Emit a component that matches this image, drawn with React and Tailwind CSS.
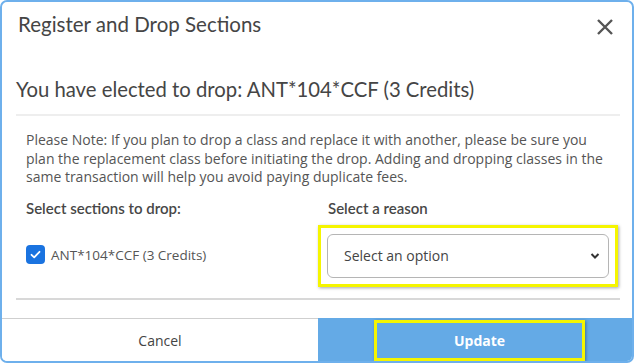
import React from "react";

const DropDialog = () => {
  return (
    <div className="w-[635px] h-[364px] bg-white">
      <div className="w-[634px] h-[363px] border-2 border-[#6eb0ec] rounded-[7px] overflow-hidden flex flex-col bg-white">
        {/* Header */}
        <div className="flex items-start justify-between pl-[16px] pr-[18px] pt-[9px] h-[44px]">
          <h2 className="text-[20.5px] leading-[26px] text-[#454545] font-['Lato',sans-serif]">
            Register and Drop Sections
          </h2>
          <button className="mt-[7px] text-[#555]">
            <svg width="18" height="18" viewBox="0 0 18 18" fill="none" stroke="currentColor" strokeWidth="2.4">
              <path d="M2 2L16 16M16 2L2 16" />
            </svg>
          </button>
        </div>

        <div className="flex-1 px-[14px] flex flex-col">
          <div className="pt-[31px] pb-[13px] border-b-2 border-[#eeeeee] mr-[-2px]">
            <h3 className="text-[20.3px] leading-[24px] text-[#454545] font-['Lato',sans-serif]">
              You have elected to drop: ANT*104*CCF (3 Credits)
            </h3>
          </div>

          <div className="pl-[10px] pt-[15px] font-['Open_Sans',sans-serif] text-[14px] leading-[18.5px] text-[#555]">
            <p className="whitespace-nowrap">
              Please Note: If you plan to drop a class and replace it with another, please be sure you
              <br />
              plan the replacement class before initiating the drop. Adding and dropping classes in the
              <br />
              same transaction will help you avoid paying duplicate fees.
            </p>
          </div>

          <div className="grid grid-cols-2 px-[10px] pt-[11px]">
            <div>
              <div className="text-[15px] leading-[20px] font-semibold text-[#474747] font-['Lato',sans-serif]">
                Select sections to drop:
              </div>
              <label className="flex items-center gap-[6px] mt-[27px] font-['Open_Sans',sans-serif] text-[13.5px] text-[#555]">
                <span className="w-[19px] h-[19px] rounded-[4px] bg-[#1a73e0] flex items-center justify-center">
                  <svg width="13" height="13" viewBox="0 0 13 13" fill="none" stroke="white" strokeWidth="1.8" strokeLinecap="round" strokeLinejoin="round">
                    <path d="M2.5 6.8L5.2 9.3L10.5 3.8" />
                  </svg>
                </span>
                ANT*104*CCF (3 Credits)
              </label>
            </div>
            <div className="pl-[11px]">
              <div className="text-[15px] leading-[20px] font-semibold text-[#474747] font-['Lato',sans-serif]">
                Select a reason
              </div>
              <div className="ml-[-10px] mt-[7px] w-[300px] h-[62px] border-[3px] border-[#f5f500] shadow-[1px_1px_3px_rgba(0,0,0,0.35)] p-[6px]">
                <div className="h-[44px] rounded-[6px] border border-[#b5b5b5] flex items-center justify-between pl-[16px] pr-[8px] font-['Open_Sans',sans-serif] text-[14px] text-[#444]">
                  <span>Select an option</span>
                  <svg width="10" height="8" viewBox="0 0 10 8" fill="none" stroke="#333" strokeWidth="2">
                    <path d="M1.5 2L5 5.5L8.5 2" />
                  </svg>
                </div>
              </div>
            </div>
          </div>

          <div className="mt-[11px] border-t-2 border-[#d8d8d8] mr-[-2px]" />
        </div>

        {/* Footer */}
        <div className="flex h-[43px] font-['Open_Sans',sans-serif] text-[14px]">
          <button className="w-[316px] border-t border-[#cfcfcf] text-[#444] bg-white">Cancel</button>
          <div className="flex-1 bg-[#64aae6] flex items-center">
            <button className="ml-[56px] w-[211px] h-[41px] mt-[2px] border-[3px] border-[#f5f500] shadow-[1px_1px_3px_rgba(0,0,0,0.35)] text-white font-bold">
              Update
            </button>
          </div>
        </div>
      </div>
    </div>
  );
};

export default function App() {
  return <DropDialog />;
}
